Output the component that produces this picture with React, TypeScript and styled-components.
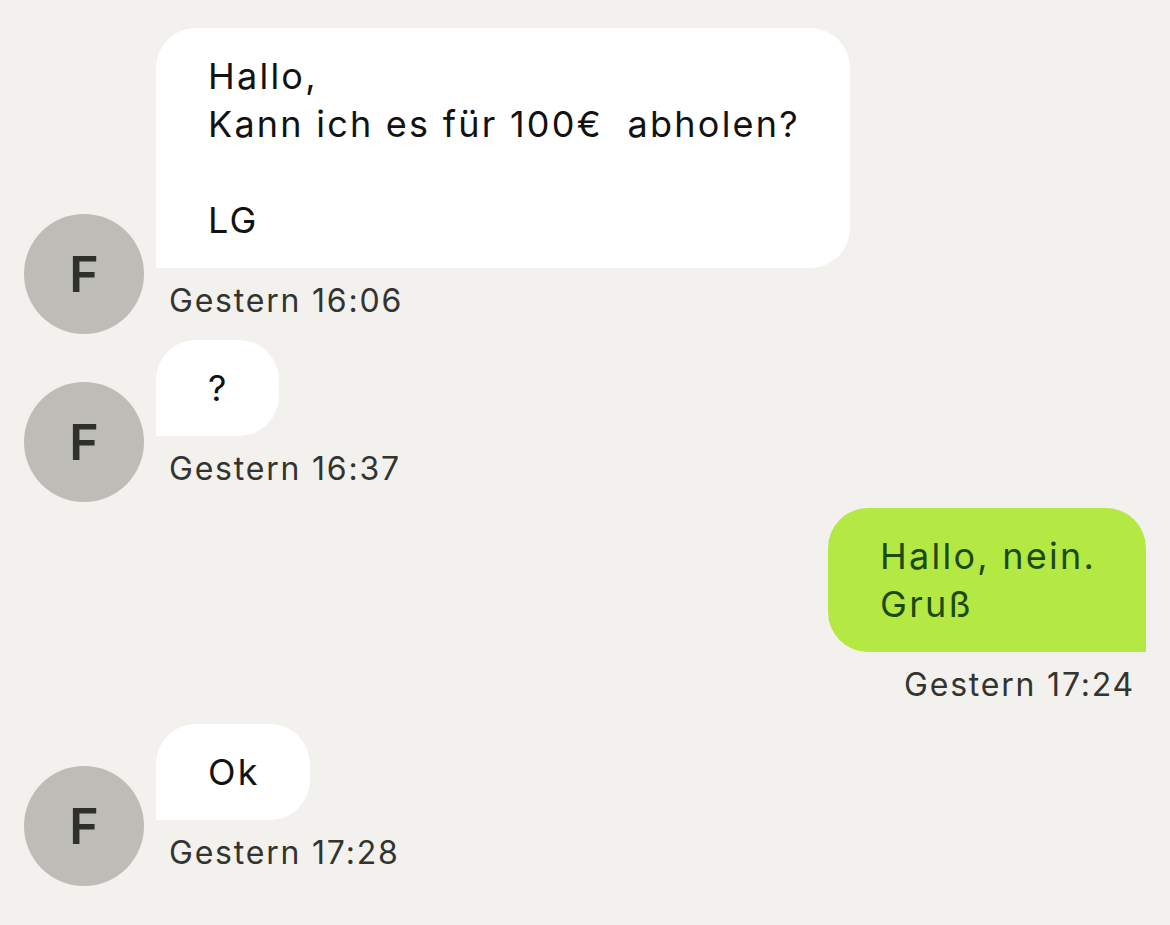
import React from "react";
import styled, { createGlobalStyle, css } from "styled-components";

const GlobalStyle = createGlobalStyle`
  html, body {
    margin: 0;
    padding: 0;
    background: #f2f1ee;
  }
  body {
    font-family: Inter, "Noto Sans", "Liberation Sans", sans-serif;
    -webkit-font-smoothing: antialiased;
  }
`;

const Page = styled.div`
  display: flex;
  flex-direction: column;
  gap: 6px;
  padding: 28px 24px;
  min-height: 925px;
  box-sizing: border-box;
  background: #f2f1ee;
`;

const Row = styled.div<{ $out?: boolean }>`
  display: flex;
  align-items: flex-end;
  gap: 12px;
  justify-content: ${(p) => (p.$out ? "flex-end" : "flex-start")};
`;

const Avatar = styled.div`
  flex: none;
  width: 120px;
  height: 120px;
  border-radius: 50%;
  background: #bdbcb6;
  color: #2f2f2c;
  display: flex;
  align-items: center;
  justify-content: center;
  font-size: 50px;
  font-weight: 600;
`;

const Column = styled.div<{ $out?: boolean }>`
  display: flex;
  flex-direction: column;
  align-items: ${(p) => (p.$out ? "flex-end" : "flex-start")};
`;

const Bubble = styled.div<{ $out?: boolean }>`
  padding: 24px 50px 24px 52px;
  font-size: 36px;
  line-height: 48px;
  letter-spacing: 0.062em;
  white-space: pre-wrap;
  ${(p) =>
    p.$out
      ? css`
          background: #b4e843;
          color: #1c4a0e;
          border-radius: 40px 40px 0 40px;
        `
      : css`
          background: #ffffff;
          color: #121212;
          border-radius: 40px 40px 40px 0;
        `}
`;

const Time = styled.div`
  padding: 0 11px 0 13px;
  font-size: 32px;
  line-height: 66px;
  letter-spacing: 0.056em;
  color: #34342f;
`;

type Msg = { text: string; time: string; out?: boolean };

const messages: Msg[] = [
  { text: "Hallo,\nKann ich es für 100€  abholen?\n\nLG", time: "Gestern 16:06" },
  { text: "?", time: "Gestern 16:37" },
  { text: "Hallo, nein.\nGruß", time: "Gestern 17:24", out: true },
  { text: "Ok", time: "Gestern 17:28" },
];

export default function App() {
  return (
    <>
      <GlobalStyle />
      <Page>
        {messages.map((m, i) => (
          <Row key={i} $out={m.out}>
            {!m.out && <Avatar>F</Avatar>}
            <Column $out={m.out}>
              <Bubble $out={m.out}>{m.text}</Bubble>
              <Time>{m.time}</Time>
            </Column>
          </Row>
        ))}
      </Page>
    </>
  );
}
